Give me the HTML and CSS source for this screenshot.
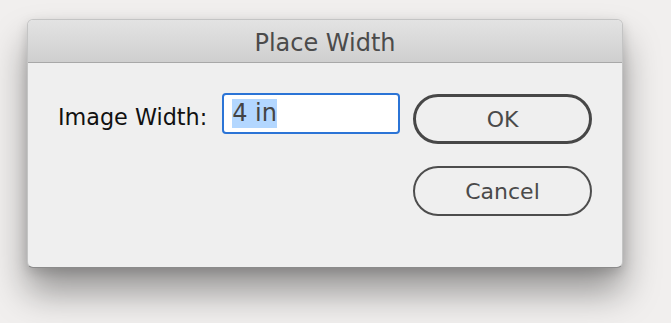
FILE: index.html
```html
<!DOCTYPE html>
<html lang="en">
<head>
    <meta charset="UTF-8">
    <title>Place Width</title>
    <link rel="stylesheet" href="styles.css">
</head>
<body>

    <div class="dialog">
        <div class="titlebar">Place Width</div>

        <div class="content">
            <label class="label" for="width-field">Image Width:</label>
            <div class="field" id="width-field"><span class="selected">4 in</span></div>

            <div class="buttons">
                <button class="btn btn-default">OK</button>
                <button class="btn">Cancel</button>
            </div>
        </div>
    </div>

</body>
</html>
```

FILE: styles.css
```css
body {
    margin: 0;
    padding: 19px 0 0 27px;
    background: #f1efee;
    font-family: 'DejaVu Sans', Verdana, sans-serif;
    height: 323px;
    box-sizing: border-box;
    overflow: hidden;
}

.dialog {
    width: 596px;
    height: 249px;
    box-sizing: border-box;
    background-color: #efefef;
    border-radius: 6px;
    border: 1px solid rgba(0, 0, 0, 0.18);
    border-bottom-color: rgba(0, 0, 0, 0.42);
    box-shadow: 0 24px 36px rgba(0, 0, 0, 0.38), 0 4px 12px rgba(0, 0, 0, 0.15);
    overflow: hidden;
}

.titlebar {
    height: 38px;
    padding-top: 4px;
    line-height: 39px;
    text-align: center;
    font-size: 24px;
    color: #4b4b4b;
    background: linear-gradient(to bottom, #e3e3e3, #cfcfcf);
    border-bottom: 1px solid #a8a8a8;
}

.content {
    display: flex;
    align-items: flex-start;
    padding: 31px 30px 0 30px;
}

.label {
    font-size: 22.3px;
    line-height: 26px;
    padding-top: 10px;
    color: #111;
    margin-right: 15px;
    white-space: nowrap;
}

.field {
    width: 179px;
    height: 41px;
    margin-top: -1px;
    box-sizing: border-box;
    padding: 4px 8px;
    background-color: #fff;
    border: 2px solid #2b74d6;
    border-radius: 4px;
    font-size: 24px;
    color: #444;
}

.selected {
    display: inline-block;
    line-height: 29px;
    background-color: #b3d7ff;
}

.buttons {
    display: flex;
    flex-direction: column;
    gap: 22px;
    margin-left: 13px;
}

.btn {
    width: 179px;
    height: 50px;
    box-sizing: border-box;
    background: transparent;
    border: 2px solid #4d4d4d;
    border-radius: 25px;
    font-family: 'DejaVu Sans', Verdana, sans-serif;
    font-size: 22px;
    color: #4a4a4a;
    padding: 0;
    display: flex;
    align-items: center;
    justify-content: center;
}

.btn-default {
    border: 3px solid #474747;
}
```
